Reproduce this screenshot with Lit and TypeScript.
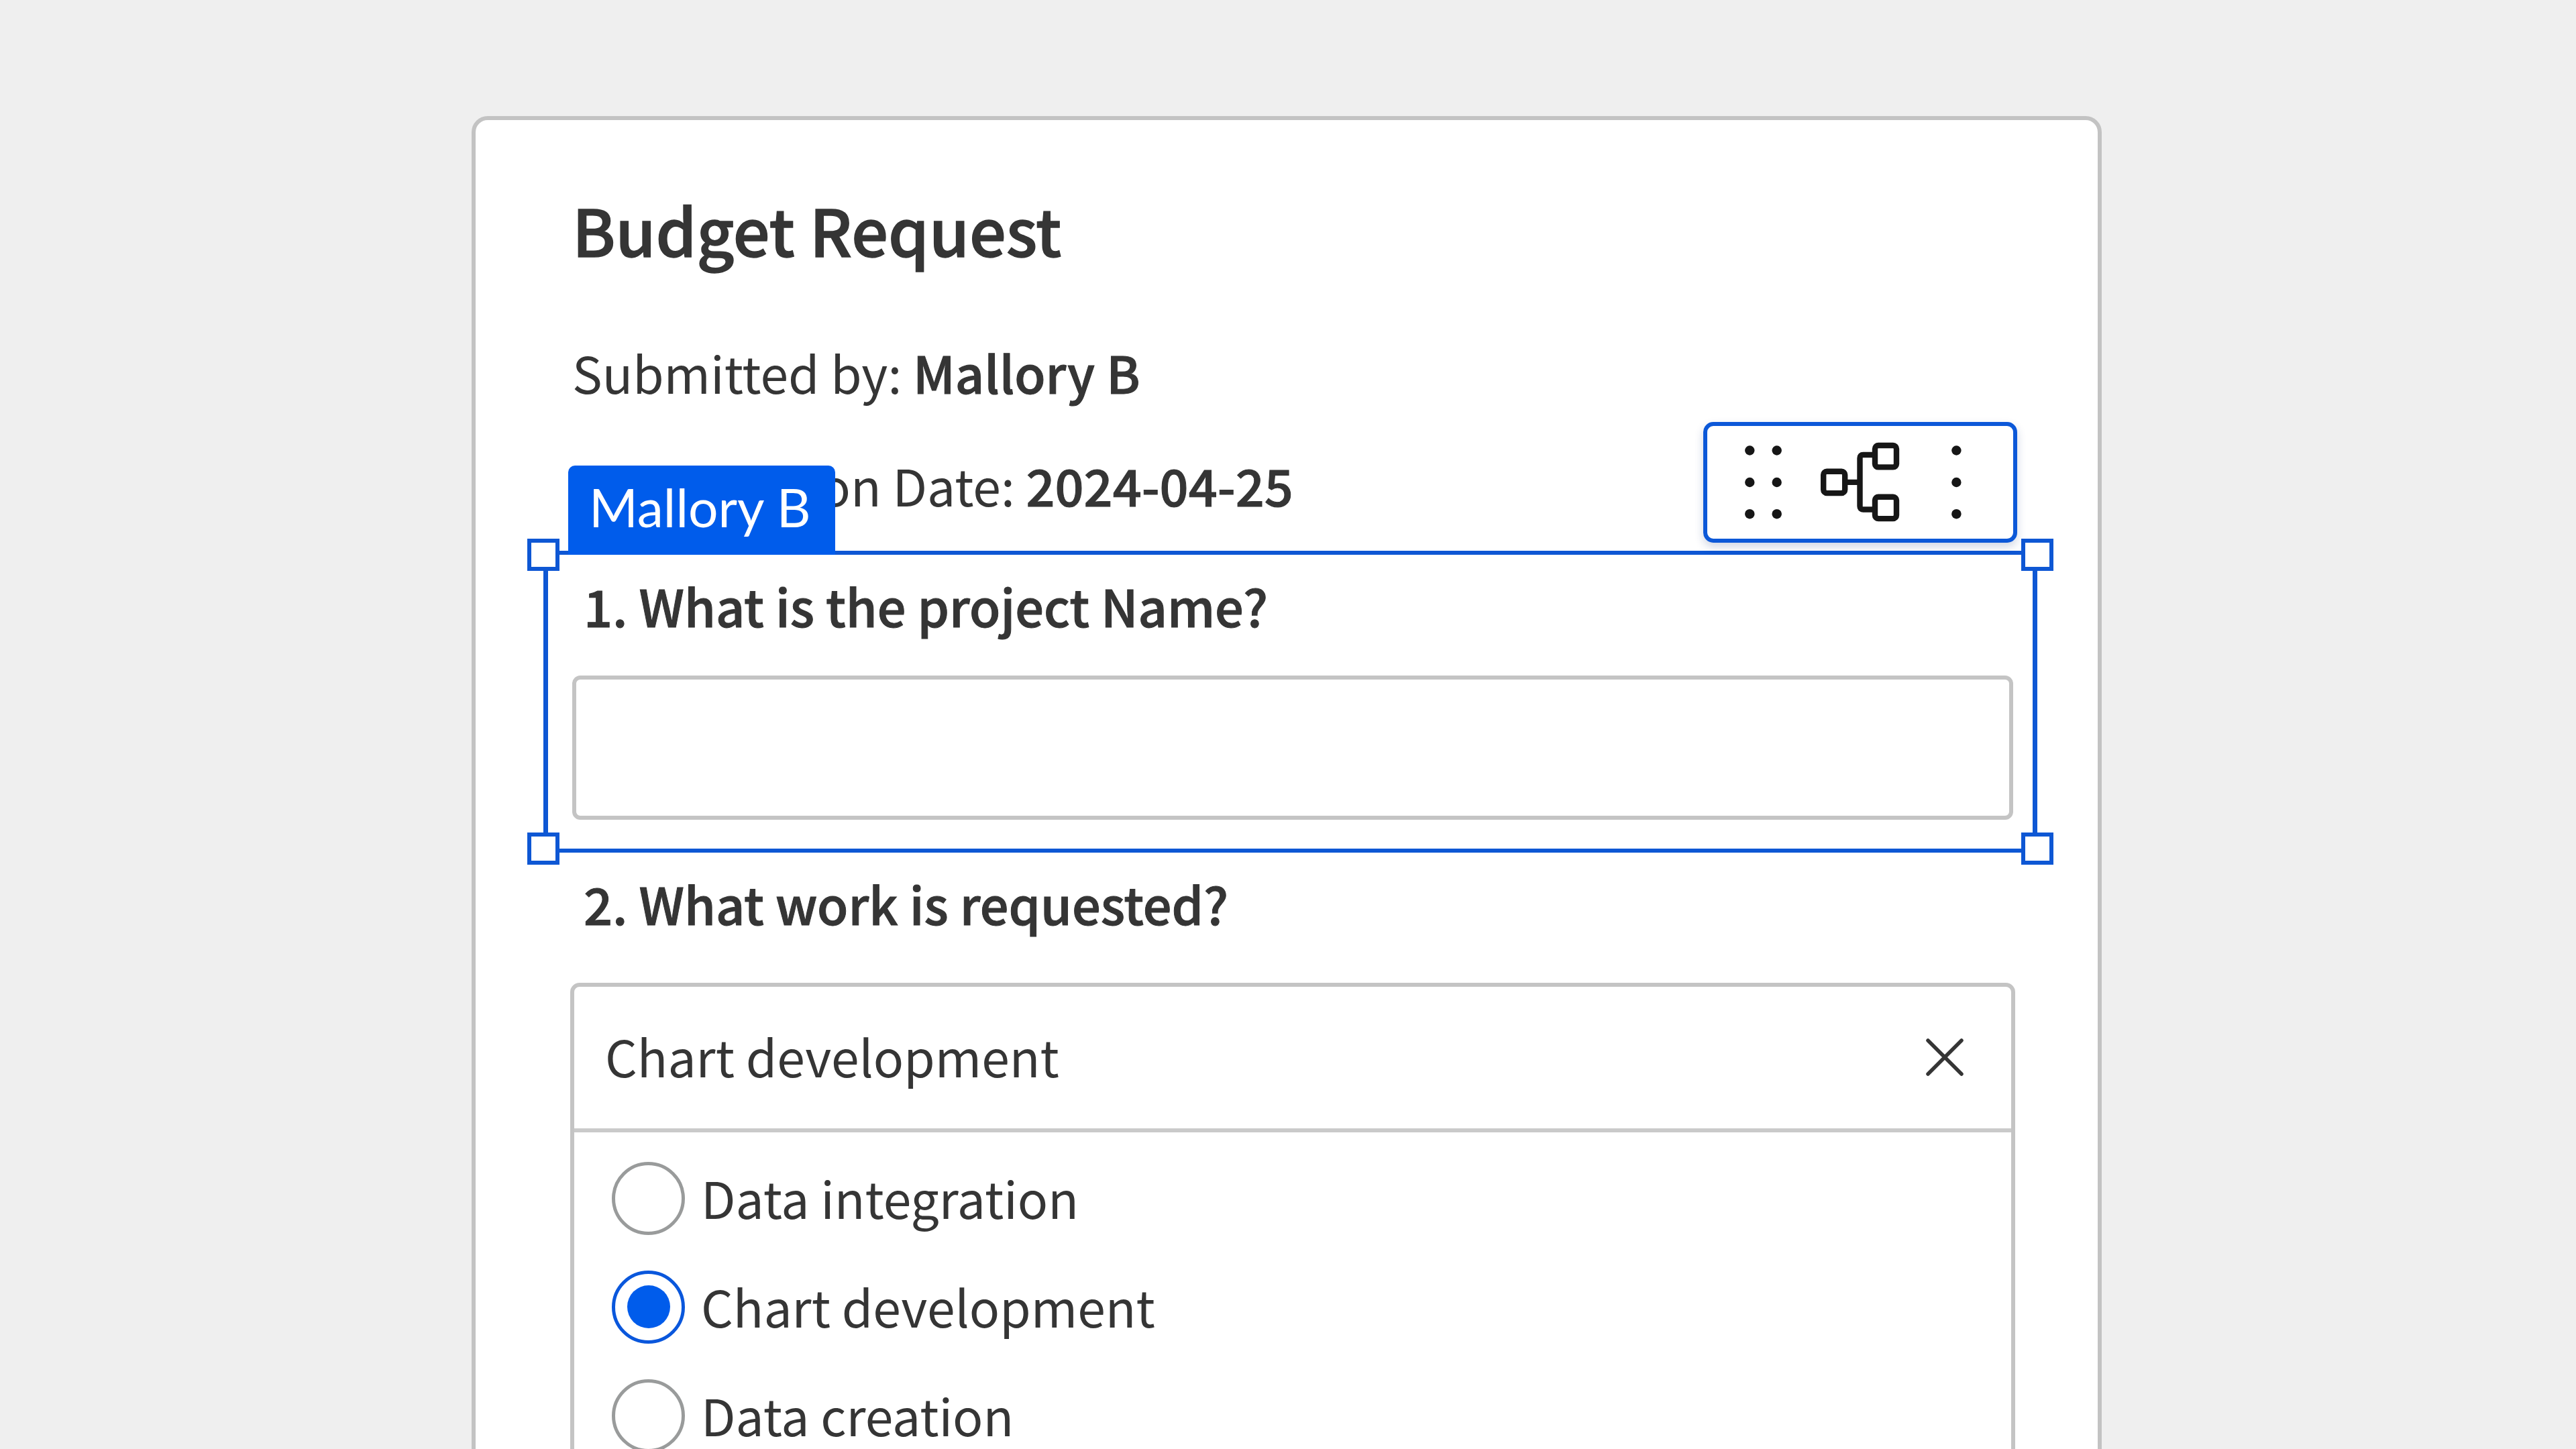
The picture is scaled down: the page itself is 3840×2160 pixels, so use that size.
import { LitElement, html, css, svg } from "lit";
import { customElement, property, state } from "lit/decorators.js";
import { classMap } from "lit/directives/class-map.js";

@customElement("field-toolbar")
class FieldToolbar extends LitElement {
  static styles = css`
    :host {
      display: block;
      box-sizing: border-box;
      width: 468px;
      height: 180px;
      border: 6px solid #0c58d8;
      border-radius: 15px;
      background: #fff;
      box-shadow: 0 6px 14px rgba(20, 50, 120, 0.2);
    }
    .icons {
      display: block;
      width: 456px;
      height: 168px;
    }
    .dot {
      fill: #161616;
    }
    .line {
      fill: none;
      stroke: #161616;
      stroke-width: 8.4;
    }
  `;

  render() {
    const rows = [36.5, 84, 131.2];
    const columns = [63.3, 103.7, 371.4];
    return html`
      <svg class="icons" viewBox="0 0 456 168">
        ${columns.map((x) => rows.map((y) => svg`<circle class="dot" cx=${x} cy=${y} r="7.2" />`))}
        <rect class="line" x="173.2" y="67.7" width="32" height="32.4" rx="5" />
        <rect class="line" x="250" y="29" width="32" height="32.4" rx="5" />
        <rect class="line" x="250" y="105.7" width="32" height="32.4" rx="5" />
        <path class="line" d="M205 83.9H227.5M250 43H232.5Q227.5 43 227.5 48V119.5Q227.5 124.5 232.5 124.5H250" />
      </svg>
    `;
  }
}

@customElement("radio-option")
class RadioOption extends LitElement {
  static styles = css`
    :host {
      display: flex;
      align-items: center;
      gap: 24px;
      height: 110px;
    }
    .ring {
      box-sizing: border-box;
      width: 109px;
      height: 109px;
      border: 5px solid #999b9b;
      border-radius: 50%;
      display: flex;
      align-items: center;
      justify-content: center;
      flex: none;
    }
    .ring.on {
      border-color: #0a57dc;
    }
    .bullet {
      width: 64px;
      height: 64px;
      border-radius: 50%;
      background: #005ceb;
    }
    .label {
      line-height: 100px;
      padding-bottom: 3px;
      white-space: nowrap;
    }
  `;

  @property() label = "";
  @property({ type: Boolean }) checked = false;

  render() {
    return html`
      <span class=${classMap({ ring: true, on: this.checked })}>
        ${this.checked ? html`<span class="bullet"></span>` : ""}
      </span>
      <span class="label">${this.label}</span>
    `;
  }
}

@customElement("app-root")
class AppRoot extends LitElement {
  static styles = css`
    :host {
      display: flex;
      align-items: flex-start;
      box-sizing: border-box;
      width: 3840px;
      height: 2160px;
      overflow: hidden;
      background: #efefef;
      padding: 173px 0 0 703px;
      font-family: "Noto Sans CJK SC", "Noto Sans", sans-serif;
      font-size: 75px;
      line-height: 100px;
      color: #353535;
    }
    .card {
      box-sizing: border-box;
      width: 2430px;
      height: 2100px;
      flex: none;
      border: 6px solid #c3c3c3;
      border-radius: 24px;
      background: #fff;
      padding: 102px 126px 0 144px;
    }
    .title {
      margin: 0;
      font-size: 96.8px;
      font-weight: 500;
      line-height: 120px;
      -webkit-text-stroke: 1.4px #353535;
    }
    .meta {
      margin-top: 104px;
      display: flex;
      flex-direction: column;
      gap: 68px;
      white-space: nowrap;
    }
    .meta-row {
      height: 100px;
    }
    .indented {
      padding-left: 52px;
    }
    .strong,
    .question {
      font-size: 75.5px;
      font-weight: 500;
      -webkit-text-stroke: 1px #353535;
    }
    .strong {
      line-height: 0;
    }
    .question {
      padding-left: 17px;
      white-space: nowrap;
    }
    .selected {
      position: relative;
      box-sizing: border-box;
      width: 2227px;
      height: 450px;
      margin: 48px 0 25px -43px;
      padding: 25px 29px 0 36px;
      border: solid #0e57d4;
      border-width: 6px 7px;
    }
    .input {
      box-sizing: border-box;
      height: 215px;
      margin-top: 55px;
      border: 6px solid #c4c4c4;
      border-radius: 12px;
      background: #fff;
    }
    .handle {
      position: absolute;
      box-sizing: border-box;
      width: 48px;
      height: 48px;
      border: 6px solid #0e57d4;
      background: #fff;
    }
    .tl {
      left: -31px;
      top: -24px;
    }
    .tr {
      right: -31px;
      top: -24px;
    }
    .bl {
      left: -31px;
      bottom: -24px;
    }
    .br {
      right: -31px;
      bottom: -24px;
    }
    .tag {
      position: absolute;
      left: 30px;
      top: -133px;
      box-sizing: border-box;
      width: 398px;
      height: 133px;
      padding-left: 31px;
      border-radius: 10px 10px 0 0;
      background: #005ceb;
      color: #fff;
      font-family: Lato, sans-serif;
      font-size: 78.6px;
      line-height: 124px;
      white-space: nowrap;
    }
    .toolbar {
      position: absolute;
      right: 23px;
      top: -198px;
    }
    .select {
      box-sizing: border-box;
      height: 900px;
      margin: 69px -3px 0;
      border: 6px solid #c4c4c4;
      border-radius: 14px;
    }
    .value {
      display: flex;
      justify-content: space-between;
      align-items: flex-start;
      box-sizing: border-box;
      height: 217px;
      padding: 53px 68px 0 46px;
      border-bottom: 6px solid #cacaca;
    }
    .close {
      width: 62px;
      height: 62px;
      margin-top: 21px;
    }
    .close-line {
      fill: none;
      stroke: #353535;
      stroke-width: 5.5;
      stroke-linecap: round;
    }
    .options {
      display: flex;
      flex-direction: column;
      gap: 52.3px;
      padding: 43px 0 0 56px;
    }
  `;

  @state() private choice = "Chart development";
  private options = ["Data integration", "Chart development", "Data creation"];

  render() {
    return html`
      <div class="card">
        <h1 class="title">Budget Request</h1>
        <div class="meta">
          <div class="meta-row">Submitted by: <span class="strong">Mallory B</span></div>
          <div class="meta-row indented">Submission Date: <span class="strong">2024-04-25</span></div>
        </div>
        <div class="selected">
          <div class="question">1. What is the project Name?</div>
          <div class="input"></div>
          <div class="tag">Mallory B</div>
          <span class="handle tl"></span>
          <span class="handle tr"></span>
          <span class="handle bl"></span>
          <span class="handle br"></span>
          <field-toolbar class="toolbar"></field-toolbar>
        </div>
        <div class="question">2. What work is requested?</div>
        <div class="select">
          <div class="value">
            <span>${this.choice}</span>
            <svg class="close" viewBox="0 0 62 62">
              <path class="close-line" d="M6 6L56 56M56 6L6 56" />
            </svg>
          </div>
          <div class="options">
            ${this.options.map(
              (o) => html`<radio-option .label=${o} ?checked=${o === this.choice}></radio-option>`
            )}
          </div>
        </div>
      </div>
    `;
  }
}
